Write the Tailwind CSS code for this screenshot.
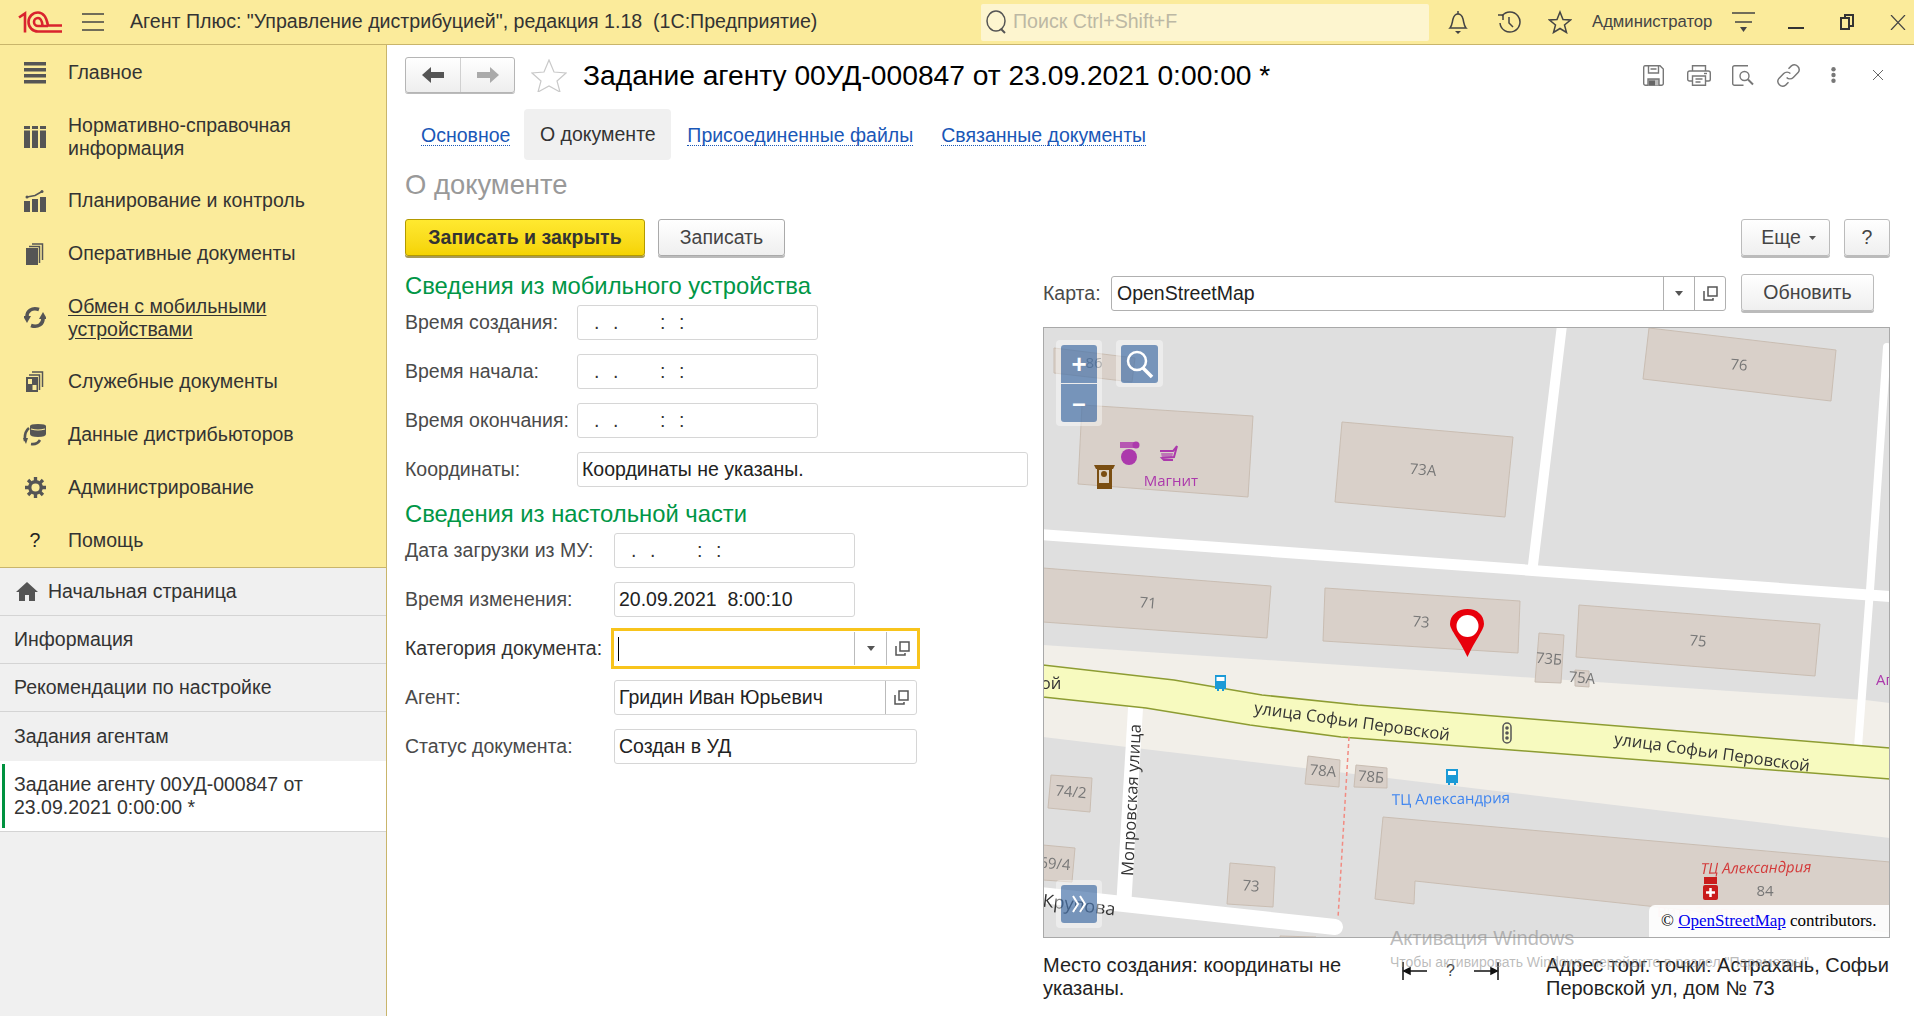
<!DOCTYPE html>
<html lang="ru">
<head>
<meta charset="utf-8">
<title>Задание агенту</title>
<script src="https://cdn.jsdelivr.net/npm/@tailwindcss/browser@4"></script>
</head>
<body class="bg-white">
<div class="relative w-[1914px] h-[1016px] overflow-hidden flex flex-col font-['Liberation_Sans',sans-serif] text-[19.5px] text-[#333]">

  <!-- top bar -->
  <header class="h-[45px] shrink-0 bg-[#fbeb9b] border-b border-[#c9b56b] flex items-center">
    <svg class="ml-[18px] w-[44px] h-[22px] shrink-0" viewBox="0 0 44 22" fill="none" stroke="#d9232e" stroke-width="2.600">
      <path d="M1 6.500L7 2.500V21.500"/><path d="M44 20.500H20A9.500 9.500 0 1 1 20 1.500C26 1.500 28.500 6 30 14.500H44"/><path d="M24.500 14.500C24 10 22.500 7 20 7A4 4 0 0 0 20 15H30"/>
    </svg>
    <svg class="ml-[20px] w-[22px] h-[18px] shrink-0" viewBox="0 0 22 18" stroke="#444" stroke-width="1.400"><path d="M0 1h22M0 9h22M0 17h22"/></svg>
    <div class="ml-[26px] w-[851px] shrink-0 whitespace-pre text-[19.6px] text-[#333]">Агент Плюс: "Управление дистрибуцией", редакция 1.18  (1С:Предприятие)</div>
    <div class="w-[448px] h-[37px] shrink-0 rounded-[2px] bg-[#fdf5cf] flex items-center pl-[4px]">
      <svg class="w-[24px] h-[24px] shrink-0" viewBox="0 0 24 24" fill="none" stroke="#555" stroke-width="1.500"><ellipse cx="11" cy="11" rx="9" ry="10"/><path d="M16 19l4 4" stroke-width="2"/></svg>
      <span class="ml-[4px] text-[#bcb8a4] text-[19.6px]">Поиск Ctrl+Shift+F</span>
    </div>
    <svg class="ml-[18px] w-[22px] h-[24px] shrink-0" viewBox="0 0 22 24" fill="none" stroke="#444" stroke-width="1.500"><path d="M3 18c2-2 2-5 3-9 .8-3 3-5 5-5s4.200 2 5 5c1 4 1 7 3 9z"/><path d="M11 1v3"/><path d="M8 21h6l-3 3z" fill="#444" stroke="none"/></svg>
    <svg class="ml-[28px] w-[24px] h-[24px] shrink-0" viewBox="0 0 24 24" fill="none" stroke="#444" stroke-width="1.500"><path d="M5 6a10 10 0 1 1-2 7"/><path d="M1 5l5 0 0 5"/><path d="M12 7v6l4 4"/></svg>
    <svg class="ml-[27px] w-[24px] h-[24px] shrink-0" viewBox="0 0 24 24" fill="none" stroke="#444" stroke-width="1.500"><path d="M12 2l3 7.500 7.500.5-6 5 2 7.500-6.500-4-6.500 4 2-7.500-6-5 7.500-.5z"/></svg>
    <span class="ml-[20px] w-[120px] shrink-0 text-[16.7px] text-[#444] whitespace-nowrap">Администратор</span>
    <svg class="ml-[20px] w-[23px] h-[22px] shrink-0" viewBox="0 0 23 22" stroke="#444" stroke-width="1.400"><path d="M0 2h23M3 11h17"/><path d="M8 16h7l-3.500 5z" fill="#444" stroke="none"/></svg>
    <div class="ml-[33px] w-[16px] h-[2px] mt-[12px] bg-[#333] shrink-0"></div>
    <svg class="ml-[36px] w-[14px] h-[16px] shrink-0" viewBox="0 0 14 16" fill="none" stroke="#333" stroke-width="2"><rect x="1" y="4" width="8" height="11"/><path d="M5 4V1h8v11h-4"/></svg>
    <svg class="ml-[36px] w-[16px] h-[15px] shrink-0" viewBox="0 0 16 15" stroke="#444" stroke-width="1.200"><path d="M1 0l14 15M15 0L1 15"/></svg>
  </header>

  <div class="flex flex-1 min-h-0">
    <!-- left panel -->
    <aside class="w-[387px] shrink-0 bg-[#f0f0f0] border-r border-[#c9b56b] flex flex-col">
      <nav class="h-[523px] shrink-0 bg-[#fbeb9b] border-b border-[#c9b56b] flex flex-col leading-[23px] pt-[1px]">
        <a class="h-[53px] flex items-center">
          <svg class="ml-[24px] mr-[22px] w-[22px] h-[22px] shrink-0" viewBox="0 0 22 22" fill="#555"><rect y="0" width="22" height="3.500"/><rect y="6" width="22" height="3.500"/><rect y="12" width="22" height="3.500"/><rect y="18" width="22" height="3.500"/></svg>
          Главное</a>
        <a class="h-[75px] flex items-center">
          <svg class="ml-[24px] mr-[22px] w-[22px] h-[22px] shrink-0" viewBox="0 0 22 22" fill="#555"><path d="M0 0h6v3H0zM8 0h6v3H8zM16 0h6v3h-6zM0 4.500h6V22H0zM8 4.500h6V22H8zM16 4.500h6V22h-6z"/></svg>
          <span>Нормативно-справочная<br>информация</span></a>
        <a class="h-[53px] flex items-center">
          <svg class="ml-[24px] mr-[22px] w-[22px] h-[22px] shrink-0" viewBox="0 0 22 22" fill="#555"><rect y="11" width="6" height="11"/><rect x="8" y="9" width="6" height="13"/><rect x="16" y="7" width="6" height="15"/><path d="M3 7l8-1.500 7-4" fill="none" stroke="#555" stroke-width="1.500"/><circle cx="3" cy="7" r="1.500"/><circle cx="18" cy="1.500" r="1.500"/></svg>
          Планирование и контроль</a>
        <a class="h-[53px] flex items-center">
          <svg class="ml-[26px] mr-[24px] w-[18px] h-[22px] shrink-0" viewBox="0 0 18 22" fill="none" stroke="#555"><rect x="0" y="5" width="12" height="17" fill="#555" stroke="none"/><path d="M13.500 20V3.500H3M16.500 17V1H6" stroke-width="1.500"/></svg>
          Оперативные документы</a>
        <a class="h-[75px] flex items-center">
          <svg class="ml-[24px] mr-[22px] w-[22px] h-[23px] shrink-0" viewBox="0 0 22 23" fill="none" stroke="#555" stroke-width="3.600"><path d="M15 3.500C8 1 2.500 5 3 11.500"/><path d="M7 19.500C14 22 19.500 18 19 11.500"/><path d="M-1 10h8l-4 7z" fill="#555" stroke="none"/><path d="M23 13h-8l4-7z" fill="#555" stroke="none"/></svg>
          <span class="underline underline-offset-2">Обмен с мобильными<br>устройствами</span></a>
        <a class="h-[53px] flex items-center">
          <svg class="ml-[26px] mr-[24px] w-[18px] h-[22px] shrink-0" viewBox="0 0 18 22" fill="none" stroke="#555"><rect x="0" y="6" width="12" height="15" fill="#555" stroke="none"/><rect x="2" y="8" width="4" height="5" fill="#fbeb9b" stroke="none"/><rect x="6.500" y="14" width="4" height="5" fill="#fbeb9b" stroke="none"/><path d="M13.500 19V4H3M16.500 16V1H6" stroke-width="1.500"/></svg>
          Служебные документы</a>
        <a class="h-[53px] flex items-center">
          <svg class="ml-[23px] mr-[22px] w-[23px] h-[22px] shrink-0" viewBox="0 0 23 22" fill="none" stroke="#555" stroke-width="2.600"><path d="M6 4Q1 8 2 17"/><path d="M8 20Q14 21 17 16"/><path d="M0 14h5l-2 6z" fill="#555" stroke="none"/><path d="M7 2q0-2 8-2t8 2v8q0 3-8 3t-8-3z" fill="#555" stroke="none"/><path d="M8 5q7 2 14 0" stroke="#fbeb9b" stroke-width="1.200"/></svg>
          Данные дистрибьюторов</a>
        <a class="h-[53px] flex items-center">
          <svg class="ml-[25px] mr-[22px] w-[21px] h-[21px] shrink-0" viewBox="0 0 22 22" fill="none" stroke="#555"><circle cx="11" cy="11" r="6" stroke-width="3.500"/><path d="M11 0v5M11 17v5M0 11h5M17 11h5M3.200 3.200l3.500 3.500M15.300 15.300l3.500 3.500M18.800 3.200l-3.500 3.500M6.700 15.300l-3.500 3.500" stroke-width="3.500"/></svg>
          Администрирование</a>
        <a class="h-[53px] flex items-center">
          <span class="ml-[24px] mr-[22px] w-[22px] text-center text-[#222]">?</span>
          Помощь</a>
      </nav>
      <div class="h-[48px] border-b border-[#d4d4d4] flex items-center pl-[16px]">
        <svg class="mr-[10px] w-[22px] h-[19px] shrink-0" viewBox="0 0 22 19" fill="#555"><path d="M11 0L0 10h3v9h6v-6h4v6h6v-9h3z"/></svg>
        Начальная страница</div>
      <div class="h-[48px] border-b border-[#d4d4d4] flex items-center pl-[14px]">Информация</div>
      <div class="h-[48px] border-b border-[#d4d4d4] flex items-center pl-[14px]">Рекомендации по настройке</div>
      <div class="h-[49px] flex items-center pl-[14px]">Задания агентам</div>
      <div class="relative h-[71px] bg-white border-b border-[#d4d4d4] flex items-center pl-[14px] leading-[23px]">
        <div class="absolute left-[2px] top-[3px] bottom-[3px] w-[3px] bg-[#00923f]"></div>
        <span>Задание агенту 00УД-000847 от<br>23.09.2021 0:00:00 *</span>
      </div>
    </aside>

    <!-- form -->
    <main class="w-[1527px] pl-[18px]">
      <div class="h-[36px] mt-[12px] flex items-center w-[1484px]">
        <div class="w-[110px] h-[36px] shrink-0 flex rounded-[3px] border border-[#b5b5b5] bg-linear-to-b from-white to-[#eee] shadow-[0_1px_0_#bbb]">
          <div class="w-[55px] border-r border-[#d0d0d0] flex items-center justify-center">
            <svg class="w-[22px] h-[16px]" viewBox="0 0 22 16" fill="#555"><path d="M0 8l9-8v5h13v6H9v5z"/></svg></div>
          <div class="flex-1 flex items-center justify-center">
            <svg class="w-[22px] h-[16px]" viewBox="0 0 22 16" fill="#aaa"><path d="M22 8l-9-8v5H0v6h13v5z"/></svg></div>
        </div>
        <svg class="ml-[16px] w-[36px] h-[33px] shrink-0" viewBox="0 0 36 33" fill="none" stroke="#c9c9c9" stroke-width="1.200"><path d="M18 1l5 12 12 1-9 8 3 11-11-6-11 6 3-11-9-8 12-1z"/></svg>
        <h1 class="ml-[16px] text-[28.2px] text-black whitespace-nowrap">Задание агенту 00УД-000847 от 23.09.2021 0:00:00 *</h1>
        <div class="ml-auto mr-[6px] flex items-center">
          <svg class="w-[21px] h-[21px]" viewBox="0 0 21 21" fill="none" stroke="#777" stroke-width="1.400"><path d="M2 .7h15L20.300 4v14.500a1.800 1.800 0 0 1-1.800 1.800h-16A1.800 1.800 0 0 1 .7 18.500V2.500A1.800 1.800 0 0 1 2 .7z"/><path d="M5.500 1v7h10V1M7.500 4h6"/><path d="M5 20.500V14h11v6.500" fill="#bbb"/><rect x="6" y="15.500" width="6" height="5" fill="#666" stroke="none"/></svg>
          <svg class="ml-[23px] w-[24px] h-[21px]" viewBox="0 0 24 21" fill="none" stroke="#777" stroke-width="1.400"><path d="M5.500 6V.7h13V6"/><path d="M5 16H2.500A1.800 1.800 0 0 1 .7 14.200V8a2 2 0 0 1 2-2h18.600a2 2 0 0 1 2 2v6.200a1.800 1.800 0 0 1-1.800 1.800H19"/><path d="M5.500 11h13v9.300h-13zM8.500 14h7M8.500 17h5"/><path d="M17 8.500h3"/></svg>
          <svg class="ml-[21px] w-[22px] h-[21px]" viewBox="0 0 22 21" fill="none" stroke="#777" stroke-width="1.400"><path d="M16 .7H2.500A1.800 1.800 0 0 0 .7 2.500v16a1.800 1.800 0 0 0 1.800 1.800h9"/><circle cx="12.500" cy="11" r="4.500"/><path d="M16 14.500l5 5" stroke-width="2"/></svg>
          <svg class="ml-[23px] w-[23px] h-[23px]" viewBox="0 0 24 24" fill="none" stroke="#777" stroke-width="1.500"><path d="M10 14a5 5 0 0 0 7 0l5-5a5 5 0 0 0-7-7l-3 3"/><path d="M14 10a5 5 0 0 0-7 0l-5 5a5 5 0 0 0 7 7l3-3"/></svg>
          <svg class="ml-[31px] w-[5px] h-[16px]" viewBox="0 0 5 16" fill="#777"><circle cx="2.500" cy="2.200" r="2.200"/><circle cx="2.500" cy="8" r="2.200"/><circle cx="2.500" cy="13.800" r="2.200"/></svg>
          <svg class="ml-[37px] w-[10px] h-[10px]" viewBox="0 0 10 10" stroke="#666"><path d="M0 0l10 10M10 0L0 10"/></svg>
        </div>
      </div>

      <div class="mt-[16px] h-[51px] flex items-center">
        <a class="ml-[16px] mt-[2px] text-[#1a57b7] border-b border-dotted border-[#1a57b7] leading-[20px]">Основное</a>
        <div class="ml-[14px] w-[147px] h-[51px] rounded-[4px] bg-[#f0f0f0] flex items-center justify-center">О документе</div>
        <a class="ml-[16px] mt-[2px] text-[#1a57b7] border-b border-dotted border-[#1a57b7] leading-[20px]">Присоединенные файлы</a>
        <a class="ml-[28px] mt-[2px] text-[#1a57b7] border-b border-dotted border-[#1a57b7] leading-[20px]">Связанные документы</a>
      </div>

      <div class="h-[50px] flex items-center text-[27.4px] text-[#999]">О документе</div>

      <div class="mt-[9px] h-[39px] w-[1485px] flex items-start">
        <button class="w-[240px] h-[37px] rounded-[3px] border border-[#b39a00] bg-linear-to-b from-[#ffe92f] to-[#f5d300] shadow-[0_2px_0_#a89a55] font-bold text-[#333]">Записать и закрыть</button>
        <button class="ml-[13px] w-[127px] h-[37px] rounded-[3px] border border-[#aaa] bg-linear-to-b from-white to-[#efefef] shadow-[0_2px_0_#bbb] text-[#444]">Записать</button>
        <button class="ml-auto w-[89px] h-[37px] rounded-[3px] border border-[#bbb] bg-linear-to-b from-white to-[#efefef] shadow-[0_2px_0_#bbb] flex items-center justify-center pl-[6px] text-[#444]">Еще<svg class="ml-[8px] w-[7px] h-[4px]" viewBox="0 0 7 4" fill="#555"><path d="M0 0h7L3.500 4z"/></svg></button>
        <button class="ml-[14px] w-[46px] h-[37px] rounded-[3px] border border-[#bbb] bg-linear-to-b from-white to-[#efefef] shadow-[0_2px_0_#bbb] text-[#444]">?</button>
      </div>

      <div class="grid grid-cols-[638px_847px]">
        <!-- left column -->
        <div>
          <div class="h-[47px] pt-[10px] text-[23.8px] text-[#009646] leading-[36px] whitespace-nowrap">Сведения из мобильного устройства</div>
          <div class="flex flex-col gap-[14px]">
            <div class="flex h-[35px] items-center"><span class="w-[172px] text-[#4a4a4a]">Время создания:</span><div class="w-[241px] h-[35px] border border-[#d6d6d6] rounded-[3px] pl-[16px] flex items-center"><span class="w-[19px]">.</span><span class="w-[47px]">.</span><span class="w-[19px]">:</span><span>:</span></div></div>
            <div class="flex h-[35px] items-center"><span class="w-[172px] text-[#4a4a4a]">Время начала:</span><div class="w-[241px] h-[35px] border border-[#d6d6d6] rounded-[3px] pl-[16px] flex items-center"><span class="w-[19px]">.</span><span class="w-[47px]">.</span><span class="w-[19px]">:</span><span>:</span></div></div>
            <div class="flex h-[35px] items-center"><span class="w-[172px] text-[#4a4a4a]">Время окончания:</span><div class="w-[241px] h-[35px] border border-[#d6d6d6] rounded-[3px] pl-[16px] flex items-center"><span class="w-[19px]">.</span><span class="w-[47px]">.</span><span class="w-[19px]">:</span><span>:</span></div></div>
            <div class="flex h-[35px] items-center"><span class="w-[172px] text-[#4a4a4a]">Координаты:</span><div class="w-[451px] h-[35px] border border-[#d6d6d6] rounded-[3px] pl-[4px] flex items-center text-[#222]">Координаты не указаны.</div></div>
          </div>
          <div class="h-[46px] pt-[8px] text-[23.8px] text-[#009646] leading-[38px]">Сведения из настольной части</div>
          <div class="flex flex-col gap-[14px]">
            <div class="flex h-[35px] items-center"><span class="w-[209px] text-[#4a4a4a]">Дата загрузки из МУ:</span><div class="w-[241px] h-[35px] border border-[#d6d6d6] rounded-[3px] pl-[16px] flex items-center"><span class="w-[19px]">.</span><span class="w-[47px]">.</span><span class="w-[19px]">:</span><span>:</span></div></div>
            <div class="flex h-[35px] items-center"><span class="w-[209px] text-[#4a4a4a]">Время изменения:</span><div class="w-[241px] h-[35px] border border-[#d6d6d6] rounded-[3px] pl-[4px] flex items-center text-[#222] whitespace-pre">20.09.2021  8:00:10</div></div>
            <div class="flex h-[35px] items-center"><span class="w-[209px] text-[#333]">Категория документа:</span>
              <div class="w-[303px] h-[35px] ring-[3px] ring-[#f8c41c] flex items-center">
                <div class="ml-[4px] w-px h-[24px] bg-black"></div>
                <div class="ml-auto w-[32px] h-[33px] border-l border-[#bbb] flex items-center justify-center"><svg class="w-[8px] h-[5px]" viewBox="0 0 8 5" fill="#555"><path d="M0 0h8L4 5z"/></svg></div>
                <div class="w-[31px] h-[33px] border-l border-[#bbb] flex items-center justify-center"><svg class="w-[15px] h-[15px]" viewBox="0 0 15 15" fill="none" stroke="#555" stroke-width="1.500"><path d="M5 1h9v9H5z"/><path d="M1 5v9h9v-2"/></svg></div>
              </div></div>
            <div class="flex h-[35px] items-center"><span class="w-[209px] text-[#4a4a4a]">Агент:</span>
              <div class="w-[303px] h-[35px] border border-[#d6d6d6] rounded-[3px] pl-[4px] flex items-center text-[#222]">Гридин Иван Юрьевич
                <div class="ml-auto w-[31px] h-[33px] border-l border-[#bbb] flex items-center justify-center"><svg class="w-[15px] h-[15px]" viewBox="0 0 15 15" fill="none" stroke="#555" stroke-width="1.500"><path d="M5 1h9v9H5z"/><path d="M1 5v9h9v-2"/></svg></div>
              </div></div>
            <div class="flex h-[35px] items-center"><span class="w-[209px] text-[#4a4a4a]">Статус документа:</span><div class="w-[303px] h-[35px] border border-[#d6d6d6] rounded-[3px] pl-[4px] flex items-center text-[#222]">Создан в УД</div></div>
          </div>
        </div>

        <!-- right column -->
        <div class="pt-[15px]">
          <div class="h-[39px] flex items-center">
            <span class="w-[68px] mt-[2px] text-[#4a4a4a]">Карта:</span>
            <div class="w-[615px] h-[35px] mt-[2px] border border-[#b0b0b0] rounded-[3px] pl-[5px] flex items-center text-[#222]">OpenStreetMap
              <div class="ml-auto w-[31px] h-[33px] border-l border-[#b0b0b0] flex items-center justify-center"><svg class="w-[8px] h-[5px]" viewBox="0 0 8 5" fill="#555"><path d="M0 0h8L4 5z"/></svg></div>
              <div class="w-[31px] h-[33px] border-l border-[#b0b0b0] flex items-center justify-center"><svg class="w-[15px] h-[15px]" viewBox="0 0 15 15" fill="none" stroke="#555" stroke-width="1.500"><path d="M5 1h9v9H5z"/><path d="M1 5v9h9v-2"/></svg></div>
            </div>
            <button class="ml-[15px] w-[133px] h-[37px] rounded-[3px] border border-[#bbb] bg-linear-to-b from-white to-[#efefef] shadow-[0_2px_0_#bbb] text-[#444]">Обновить</button>
          </div>

          <!-- map -->
          <div class="relative mt-[15px] w-[847px] h-[611px] border border-[#a9a9a9] overflow-hidden bg-[#dfdfdf]">
            <svg class="absolute -left-px -top-px w-[847px] h-[611px] blur-[0.4px]" viewBox="1043 327 847 611">
              <!-- beige bands -->
              <path d="M1043 645L1865 700 1890 703V838L1043 737Z" fill="#f2efe9"/>
              <!-- buildings -->
              <g fill="#d9d0c9" stroke="#c9bdb2">
                <path d="M1649 328L1836 350 1831 401 1643 379Z"/>
                <path d="M1054 348L1135 358 1132 382 1054 373Z"/>
                <path d="M1082 405L1253 416 1248 497 1078 484Z"/>
                <path d="M1342 422L1513 437 1505 517 1335 502Z"/>
                <path d="M1043 568L1271 586 1267 638 1043 622Z"/>
                <path d="M1325 588L1520 601 1518 653 1323 641Z"/>
                <path d="M1539 633L1564 635 1561 683 1535 682Z"/>
                <path d="M1579 605L1820 624 1815 676 1576 657Z"/>
                <path d="M1575 670L1589 671 1589 687 1575 686Z"/>
                <path d="M1051 775L1092 778 1090 812 1048 808Z"/>
                <path d="M1043 845L1075 848 1072 882 1043 880Z"/>
                <path d="M1230 863L1275 867 1273 907 1227 904Z"/>
                <path d="M1308 756L1340 760 1339 787 1305 784Z"/>
                <path d="M1356 765L1387 768 1387 788 1354 787Z"/>
                <path d="M1383 817L1890 862V932L1415 881 1414 904 1375 899Z"/>
                <path d="M1280 936L1316 937V940H1280Z"/>
              </g>
              <!-- white roads -->
              <g stroke="#fff" fill="none" stroke-linecap="round">
                <path d="M1040 534.500L1890 596.500" stroke-width="11"/>
                <path d="M1562 325L1533 565" stroke-width="10"/>
                <path d="M1887 347L1870 590 1858 747" stroke-width="8"/>
                <path d="M1136 700L1124 900" stroke-width="15"/>
                <path d="M1040 895L1335 927" stroke-width="16"/>
              </g>
              <!-- main road -->
              <path d="M1043 665L1174 680 1262 695 1358 705 1890 748V779L1341 737 1250 725 1146 708 1043 697Z" fill="#f7fabf" stroke="#8d9c32" stroke-width="1.500"/>
              <path d="M1349 737L1338 918" stroke="#f28b82" stroke-width="1.500" stroke-dasharray="4 3"/>
              <!-- signal, bus stops, poi -->
              <rect x="1503" y="723" width="8" height="20" rx="4" fill="#f7fabf" stroke="#555" stroke-width="1.500"/>
              <circle cx="1507" cy="728" r="1.800" fill="#555"/><circle cx="1507" cy="733" r="1.800" fill="#555"/><circle cx="1507" cy="738" r="1.800" fill="#555"/>
              <g fill="#1b9ad6">
                <path d="M1215 675h11v14h-2v2h-2v-2h-3v2h-2v-2h-2z"/>
                <path d="M1446 769h12v14h-2v2h-2v-2h-4v2h-2v-2h-2z"/>
              </g>
              <rect x="1216.500" y="677" width="8" height="4" fill="#fff"/><rect x="1448" y="771" width="8" height="4" fill="#fff"/>
              <ellipse cx="1129" cy="457" rx="8" ry="8" fill="#ac39ac"/><rect x="1120" y="442" width="14" height="6" fill="#ac39ac" opacity=".8"/><circle cx="1136" cy="445" r="3.500" fill="#ac39ac"/>
              <path d="M1160 451h13l4-5-3 11-12 1 2 2h9" fill="none" stroke="#ac39ac" stroke-width="2"/><path d="M1161 453h12l-1 5h-10z" fill="#ac39ac" opacity=".6"/>
              <path d="M1094 465h21l-2 4h-1v20h-15v-20h-1z" fill="#7a4e12"/><rect x="1099" y="470" width="10" height="13" fill="#dcd2c4"/><circle cx="1104" cy="474" r="3" fill="#7a4e12"/>
              <rect x="1704" y="877" width="13" height="7" fill="#c91c1c"/><rect x="1703" y="885" width="15" height="15" rx="2" fill="#c91c1c"/><path d="M1710.500 888v9M1706 892.500h9" stroke="#fff" stroke-width="2.500"/>
              <!-- labels -->
              <g class="font-['Open_Sans',sans-serif]" font-size="15" text-anchor="middle" fill="#777">
                <text x="1739" y="370" transform="rotate(5 1739 365)">76</text>
                <text x="1423" y="475" transform="rotate(5 1423 470)">73А</text>
                <text x="1094" y="368">86</text>
                <text x="1148" y="608" transform="rotate(5 1148 603)">71</text>
                <text x="1421" y="627" transform="rotate(5 1421 622)">73</text>
                <text x="1549" y="664" transform="rotate(5 1549 659)">73Б</text>
                <text x="1582" y="683" transform="rotate(5 1582 678)">75А</text>
                <text x="1698" y="646" transform="rotate(5 1698 641)">75</text>
                <text x="1071" y="797" transform="rotate(5 1071 792)">74/2</text>
                <text x="1055" y="869" transform="rotate(5 1055 864)">69/4</text>
                <text x="1251" y="891" transform="rotate(5 1251 886)">73</text>
                <text x="1323" y="776" transform="rotate(5 1323 771)">78А</text>
                <text x="1371" y="782" transform="rotate(5 1371 777)">78Б</text>
                <text x="1765" y="896">84</text>
                <text x="1171" y="486" fill="#ac39ac">Магнит</text>
                <text x="1884" y="685" fill="#ac39ac">Аг</text>
                <text x="1451" y="804" fill="#3d84f0" transform="rotate(-1 1451 799)">ТЦ Александрия</text>
                <text x="1756" y="873" fill="#d33a3a" font-style="italic" transform="rotate(-1 1756 868)">ТЦ Александрия</text>
                <text x="1709" y="917" fill="#eeb0b0">Вита Экспресс</text>
              </g>
              <g class="font-['Open_Sans',sans-serif]" font-size="16.600" text-anchor="middle" fill="#333">
                <text x="1352" y="727" transform="rotate(8 1352 722)">улица Софьи Перовской</text>
                <text x="1712" y="758" transform="rotate(8 1712 753)">улица Софьи Перовской</text>
                <text x="1132" y="805" transform="rotate(-87 1132 800)">Мопровская улица</text>
                <text x="1079" y="911" font-size="18" transform="rotate(7 1079 906)">Крупова</text>
                <text x="1051" y="689">ой</text>
              </g>
              <!-- marker -->
              <path d="M1467.500 657C1460 640 1450 630 1450 624C1450 615 1458 609 1467.500 609C1477 609 1484 615 1484 624C1484 630 1475 640 1467.500 657Z" fill="#e8000b"/>
              <circle cx="1467.500" cy="627" r="11" fill="#fff" transform="translate(0 -1)"/>
            </svg>
            <!-- controls -->
            <div class="absolute left-[12px] top-[12px] w-[46px] h-[86px] rounded-[4px] bg-white/40 p-[5px]">
              <div class="h-[38px] mb-px rounded-t-[3px] bg-[#003c88]/50 text-white flex items-center justify-center font-bold text-[26px]">+</div>
              <div class="h-[38px] rounded-b-[3px] bg-[#003c88]/50 text-white flex items-center justify-center font-bold text-[24px]">–</div>
            </div>
            <div class="absolute left-[72px] top-[12px] w-[47px] h-[47px] rounded-[4px] bg-white/40 p-[5px]">
              <div class="h-[38px] rounded-[3px] bg-[#003c88]/50 flex items-center justify-center">
                <svg class="w-[30px] h-[30px]" viewBox="0 0 30 30" fill="none" stroke="#fff"><circle cx="12" cy="12" r="9" stroke-width="2.500"/><path d="M18 19l9 9" stroke-width="3.500"/></svg>
              </div>
            </div>
            <div class="absolute left-[12px] top-[552px] w-[46px] h-[48px] rounded-[4px] bg-white/40 p-[5px]">
              <div class="h-[38px] rounded-[3px] bg-[#003c88]/50 flex items-center justify-center">
                <svg class="w-[14px] h-[18px]" viewBox="0 0 14 18" fill="none" stroke="#fff" stroke-width="2"><path d="M1 1l5 8-5 8M8 1l5 8-5 8"/></svg>
              </div>
            </div>
            <div class="absolute right-0 bottom-0 w-[240px] h-[32px] rounded-tl-[6px] bg-white/90 flex items-center pl-[12px] font-['Liberation_Serif',serif] text-[17px] text-black whitespace-nowrap">©&nbsp;<a class="text-[#0000ee] underline">OpenStreetMap</a>&nbsp;contributors.</div>
          </div>

          <!-- under the map -->
          <div class="mt-[16px] flex items-start leading-[23px] text-[20px] text-[#222] w-[847px]">
            <div class="w-[359px] pr-[50px]">Место создания: координаты не указаны.</div>
            <div class="w-[144px] h-[23px] mt-[5px] flex items-center">
              <svg class="w-[25px] h-[18px] shrink-0" viewBox="0 0 25 18" stroke="#111" fill="#111" stroke-width="1.500"><path d="M1 0v18M2 9h23" fill="none"/><path d="M2 9l6-3v6z"/></svg>
              <span class="ml-[19px] text-[#444] text-[16px]">?</span>
              <svg class="ml-[19px] w-[25px] h-[18px] shrink-0" viewBox="0 0 25 18" stroke="#111" fill="#111" stroke-width="1.500"><path d="M24 0v18M0 9h23" fill="none"/><path d="M23 9l-6-3v6z"/></svg>
            </div>
            <div class="flex-1">Адрес торг. точки: Астрахань, Софьи Перовской ул, дом № 73</div>
          </div>
        </div>
      </div>
    </main>
  </div>

  <!-- windows activation watermark -->
  <div class="absolute left-[1390px] top-[925px] text-[#8f8f8f]/60 pointer-events-none">
    <div class="text-[20px] leading-[26px]">Активация Windows</div>
    <div class="text-[14px] leading-[18px] mt-[2px] whitespace-nowrap">Чтобы активировать Windows, перейдите в раздел "Параметры".</div>
  </div>
</div>
</body>
</html>
